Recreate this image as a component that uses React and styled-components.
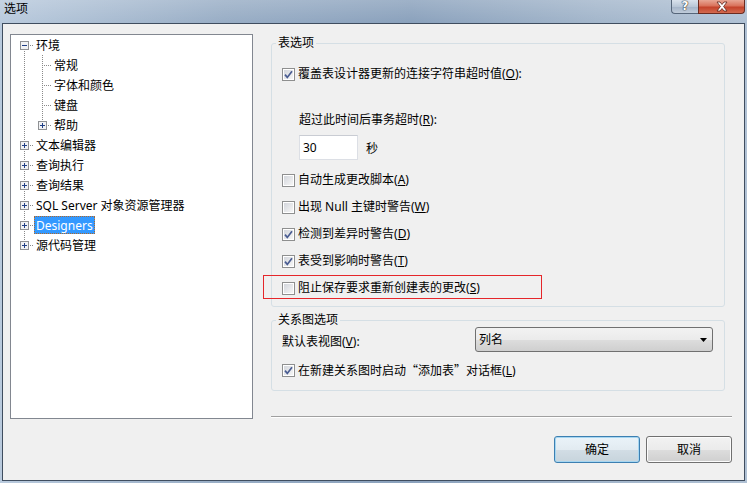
import React from 'react';
import styled, {createGlobalStyle} from 'styled-components';

const font = `"Noto Sans", "Noto Sans CJK SC", sans-serif`;
const cjkFont = `"Noto Sans CJK SC", sans-serif`;

const GlobalStyle = createGlobalStyle`
  html, body {
    margin: 0;
    padding: 0;
    overflow: hidden;
  }
  body {
    font-family: ${font};
    font-size: 12px;
    color: #000;
  }
`;

const treeItems = [
  {label: '环境', cells: [{v: 'bottom', h: true, box: 'minus'}]},
  {label: '常规', cells: [{v: 'full'}, {v: 'full', h: true}]},
  {label: '字体和颜色', cells: [{v: 'full'}, {v: 'full', h: true}]},
  {label: '键盘', cells: [{v: 'full'}, {v: 'full', h: true}]},
  {label: '帮助', cells: [{v: 'full'}, {v: 'top', h: true, box: 'plus'}]},
  {label: '文本编辑器', cells: [{v: 'full', h: true, box: 'plus'}]},
  {label: '查询执行', cells: [{v: 'full', h: true, box: 'plus'}]},
  {label: '查询结果', cells: [{v: 'full', h: true, box: 'plus'}]},
  {label: 'SQL Server 对象资源管理器', cells: [{v: 'full', h: true, box: 'plus'}]},
  {label: 'Designers', cells: [{v: 'full', h: true, box: 'plus'}], selected: true},
  {label: '源代码管理', cells: [{v: 'top', h: true, box: 'plus'}]},
];

const tableOptions = [
  {text: '自动生成更改脚本', key: 'A', checked: false},
  {text: '出现 Null 主键时警告', key: 'W', checked: false},
  {text: '检测到差异时警告', key: 'D', checked: true},
  {text: '表受到影响时警告', key: 'T', checked: true},
  {text: '阻止保存要求重新创建表的更改', key: 'S', checked: false, marked: true},
];

// dotted connector lines + expander box of one tree indent level
const TreeLines = ({v, h, box}) => {
  const y1 = v === 'bottom' ? 10 : 0;
  const y2 = v === 'top' ? 11 : 20;
  return (
    <svg width="18" height="20" viewBox="0 0 18 20" shapeRendering="crispEdges"
      style={{display: 'block', flex: 'none'}}>
      {v && <line x1="9.5" y1={y1} x2="9.5" y2={y2} stroke="#8a8a8a" strokeDasharray="1 1" />}
      {h && <line x1="11" y1="10.5" x2="18" y2="10.5" stroke="#8a8a8a" strokeDasharray="1 1" />}
      {box && (
        <g>
          <rect x="5.5" y="6.5" width="8" height="8" fill="#f1f2f4" stroke="#8f9194" />
          <line x1="7" y1="10.5" x2="12" y2="10.5" stroke="#1f3f86" />
          {box === 'plus' && <line x1="9.5" y1="8" x2="9.5" y2="13" stroke="#1f3f86" />}
        </g>
      )}
    </svg>
  );
};

const CheckBox = ({checked}) => (
  <Box>
    {checked && (
      <svg width="9" height="9" viewBox="0 0 9 9" style={{display: 'block'}}>
        <path d="M1 4.6 L3.3 7.4 L8 1.2" fill="none" stroke="#4a5d92" strokeWidth="1.7" />
      </svg>
    )}
  </Box>
);

const Option = ({text, k, checked, marked, ...rest}) => (
  <CheckRow {...rest}>
    <CheckBox checked={checked} />
    <span>{text}(<u>{k}</u>)</span>
    {marked && <Marker />}
  </CheckRow>
);

export default function App() {
  return (
    <Window>
      <GlobalStyle />
      <TitleBar>
        <Title>选项</Title>
        <Captions>
          <HelpButton>?</HelpButton>
          <CloseButton>
            <svg width="14" height="11" viewBox="0 0 14 11">
              <path d="M2 1 L5 1 L7 3.5 L9 1 L12 1 L8.6 5.5 L12 10 L9 10 L7 7.5 L5 10 L2 10 L5.4 5.5 Z"
                fill="#fff" stroke="#5a2218" strokeWidth="0.8" strokeLinejoin="round" />
            </svg>
          </CloseButton>
        </Captions>
      </TitleBar>

      <Client>
        <Tree>
          {treeItems.map((item) => (
            <TreeRow key={item.label}>
              {item.cells.map((c, i) => <TreeLines key={i} {...c} />)}
              <TreeLabel $selected={item.selected}>{item.label}</TreeLabel>
            </TreeRow>
          ))}
        </Tree>

        <RightPane>
          <Group>
            <Legend>表选项</Legend>
            <CheckRow $top={15}>
              <CheckBox checked />
              <span>覆盖表设计器更新的连接字符串超时值(<u>O</u>):</span>
            </CheckRow>
            <SubLabel>超过此时间后事务超时(<u>R</u>):</SubLabel>
            <TimeoutRow>
              <TextInput>30</TextInput>
              <span>秒</span>
            </TimeoutRow>
            {tableOptions.map((o, i) => (
              <Option key={o.key} text={o.text} k={o.key} checked={o.checked} marked={o.marked}
                $top={i === 0 ? 12 : 11} />
            ))}
          </Group>

          <Group $second>
            <Legend>关系图选项</Legend>
            <ViewRow>
              <ViewLabel>默认表视图(<u>V</u>):</ViewLabel>
              <Select>
                <span>列名</span>
                <svg width="7" height="4" viewBox="0 0 7 4">
                  <path d="M0 0 H7 L3.5 4 Z" fill="#000" />
                </svg>
              </Select>
            </ViewRow>
            <CheckRow $top={10}>
              <CheckBox checked />
              <span>在新建关系图时启动<Quote>“添加表”</Quote>对话框(<u>L</u>)</span>
            </CheckRow>
          </Group>

          <Separator />
        </RightPane>

        <ButtonRow>
          <Button $default>确定</Button>
          <Button>取消</Button>
        </ButtonRow>
      </Client>
    </Window>
  );
}

const Window = styled.div`
  width: 747px;
  height: 483px;
  display: flex;
  flex-direction: column;
  box-sizing: border-box;
  background: linear-gradient(90deg, #b9cadd 0%, #98adc5 30%, #8aa1bc 55%, #a3b6cb 80%, #b0c1d4 100%);
`;

const TitleBar = styled.div`
  height: 23px;
  flex: none;
  display: flex;
  align-items: flex-start;
  padding-left: 4px;
  background: linear-gradient(180deg, rgba(255, 255, 255, 0.18), rgba(255, 255, 255, 0));
`;

const Title = styled.div`
  margin-top: 1px;
  line-height: 16px;
  font-size: 12px;
  color: #000;
`;

const Captions = styled.div`
  margin-left: auto;
  margin-right: 2px;
  display: flex;
`;

const HelpButton = styled.div`
  width: 27px;
  height: 14px;
  box-sizing: border-box;
  border: 1px solid #56667a;
  border-top: none;
  border-right: none;
  border-radius: 0 0 0 4px;
  background: linear-gradient(180deg, #d9e2ec 0%, #b9c7d7 50%, #a5b5c9 55%, #c0ccda 100%);
  color: #fff;
  font-family: "DejaVu Sans", sans-serif;
  font-weight: bold;
  font-size: 12px;
  line-height: 13px;
  text-align: center;
  text-shadow: 0 0 1px #333, 0 0 1px #333, 0 0 1px #333;
`;

const CloseButton = styled.div`
  width: 47px;
  height: 14px;
  box-sizing: border-box;
  border: 1px solid #6b2b20;
  border-top: none;
  border-radius: 0 0 4px 0;
  background: linear-gradient(180deg, #e8a694 0%, #d9725b 45%, #c4432b 55%, #d36a4f 100%);
  display: flex;
  align-items: center;
  justify-content: center;
`;

const Client = styled.div`
  flex: 1;
  margin: 0 2px 2px 2px;
  border: 1px solid #3f4d5f;
  background: #f0f0f0;
  display: grid;
  grid-template-columns: 243px 461px;
  grid-template-rows: 385px auto;
  column-gap: 18px;
  row-gap: 17px;
  padding: 10px 0 0 7px;
  align-content: start;
`;

const Tree = styled.div`
  box-sizing: border-box;
  border: 1px solid #828790;
  background: #fff;
  padding-left: 4px;
  overflow: hidden;
`;

const TreeRow = styled.div`
  height: 20px;
  display: flex;
  align-items: center;
`;

const TreeLabel = styled.span`
  margin-left: 1px;
  padding: 1px 2px 0;
  height: 18px;
  line-height: 17px;
  white-space: nowrap;
  box-sizing: border-box;
  background: ${(p) => (p.$selected ? '#3399ff' : 'transparent')};
  color: ${(p) => (p.$selected ? '#fff' : '#000')};
  outline: ${(p) => (p.$selected ? '1px dotted #b0682a' : 'none')};
  outline-offset: -1px;
`;

const RightPane = styled.div`
  display: flex;
  flex-direction: column;
`;

const Group = styled.fieldset`
  margin: ${(p) => (p.$second ? '5px' : '1px')} 0 0 0;
  width: 454px;
  box-sizing: border-box;
  min-width: 0;
  padding: 0 10px ${(p) => (p.$second ? '12px' : '10px')} 10px;
  border: 1px solid #d5dfe5;
  border-radius: 3px;
  display: flex;
  flex-direction: column;
  align-items: flex-start;
`;

const Legend = styled.legend`
  padding: 0 2px;
  margin-left: -6px;
  line-height: 16px;
  font-size: 12px;
`;

const CheckRow = styled.div`
  position: relative;
  height: 16px;
  line-height: 16px;
  display: flex;
  align-items: center;
  gap: 3px;
  margin-top: ${(p) => p.$top || 0}px;
  white-space: nowrap;
`;

const Quote = styled.span`
  font-family: ${cjkFont};
`;

const Box = styled.span`
  width: 13px;
  height: 13px;
  box-sizing: border-box;
  flex: none;
  border: 1px solid #8e8f8f;
  padding: 1px;
  background: linear-gradient(135deg, #d3d6dc 0%, #f6f6f6 100%) content-box, #fff;
  display: flex;
  align-items: center;
  justify-content: center;
`;

const Marker = styled.span`
  position: absolute;
  left: -19px;
  top: -5px;
  width: 279px;
  height: 24px;
  box-sizing: border-box;
  border: 1px solid #e5262a;
  pointer-events: none;
`;

const SubLabel = styled.div`
  margin: 30px 0 0 17px;
  line-height: 16px;
`;

const TimeoutRow = styled.div`
  margin: 7px 0 0 17px;
  display: flex;
  align-items: center;
  gap: 8px;
`;

const TextInput = styled.div`
  width: 59px;
  height: 25px;
  box-sizing: border-box;
  border: 1px solid #dcdfe5;
  border-top-color: #c9ccd3;
  background: #fff;
  padding-left: 3px;
  line-height: 23px;
`;

const ViewRow = styled.div`
  margin-top: -1px;
  display: flex;
  align-items: center;
`;

const ViewLabel = styled.span`
  width: 193px;
  line-height: 16px;
  padding-top: 4px;
`;

const Select = styled.div`
  width: 238px;
  height: 25px;
  box-sizing: border-box;
  border: 1px solid #707070;
  border-radius: 3px;
  background: linear-gradient(180deg, #f2f2f2 0%, #ebebeb 50%, #dddddd 51%, #cfcfcf 100%);
  display: flex;
  align-items: center;
  justify-content: space-between;
  padding: 0 5px 0 3px;
  line-height: 16px;
`;

const Separator = styled.div`
  margin-top: auto;
  margin-bottom: 1px;
  border-top: 1px solid #a0a0a0;
  border-bottom: 1px solid #fff;
`;

const ButtonRow = styled.div`
  grid-column: 2;
  display: flex;
  justify-content: flex-end;
  gap: 6px;
`;

const Button = styled.div`
  width: 86px;
  height: 27px;
  box-sizing: border-box;
  border: 1px solid ${(p) => (p.$default ? '#3c7fb1' : '#707070')};
  border-radius: 3px;
  box-shadow: inset 0 0 0 1px ${(p) => (p.$default ? '#a6d6f1' : '#fcfcfc')};
  background: ${(p) =>
    p.$default
      ? 'linear-gradient(180deg, #eaf3f9 0%, #e2ebf1 50%, #d2dde5 51%, #c7d4dc 100%)'
      : 'linear-gradient(180deg, #f2f2f2 0%, #ebebeb 50%, #dddddd 51%, #cfcfcf 100%)'};
  display: flex;
  align-items: center;
  justify-content: center;
  line-height: 16px;
`;
